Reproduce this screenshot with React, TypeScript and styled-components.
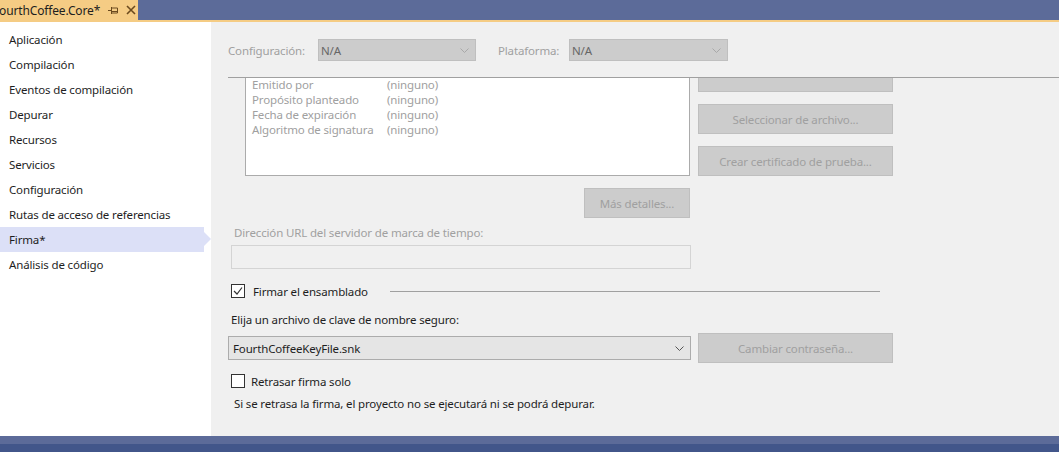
import React from "react";
import styled, { createGlobalStyle } from "styled-components";

const Global = createGlobalStyle`
  html, body { margin: 0; padding: 0; }
  body {
    font-family: "Segoe UI", "Noto Sans", "Open Sans", sans-serif;
    font-size: 11.5px;
    letter-spacing: -0.15px;
    color: #1e1e1e;
    overflow: hidden;
  }
  * { box-sizing: border-box; }
`;

const Frame = styled.div`
  width: 1059px;
  height: 452px;
  display: flex;
  flex-direction: column;
  background: #f0f0f0;
`;

const TitleBar = styled.div`
  height: 20px;
  background: #5c6b99;
  display: flex;
  align-items: stretch;
  overflow: hidden;
`;

const Tab = styled.div`
  width: 138px;
  background: #f5cc84;
  display: flex;
  align-items: center;
  overflow: hidden;
  white-space: nowrap;
`;

const TabTitle = styled.span`
  margin-left: -7px;
  font-size: 12px;
  color: #1e1e1e;
`;

const TabIcon = styled.svg<{ $gap: number }>`
  flex: none;
  margin-left: ${(p) => p.$gap}px;
`;

const Accent = styled.div`
  height: 2px;
  background: #f5cc84;
`;

const Body = styled.div`
  flex: 1;
  display: flex;
  min-height: 0;
`;

const Sidebar = styled.nav`
  width: 211px;
  background: #ffffff;
  padding-top: 5px;
  display: flex;
  flex-direction: column;
`;

const NavItem = styled.div<{ $active?: boolean }>`
  position: relative;
  height: 25px;
  line-height: 25px;
  padding-left: 9px;
  width: 204px;
  color: #1e1e1e;
  background: ${(p) => (p.$active ? "#dce0f7" : "transparent")};
  &::after {
    content: "";
    display: ${(p) => (p.$active ? "block" : "none")};
    position: absolute;
    right: -7px;
    top: 5px;
    border-top: 7.5px solid transparent;
    border-bottom: 7.5px solid transparent;
    border-left: 7px solid #dce0f7;
  }
`;

const Main = styled.main`
  flex: 1;
  display: flex;
  flex-direction: column;
  background: #f0f0f0;
  min-width: 0;
`;

const Toolbar = styled.div`
  display: flex;
  align-items: center;
  padding: 17px 0 0 17px;
  height: 39px;
`;

const DimLabel = styled.span<{ $w: number; $ml?: number }>`
  color: #a0a0a0;
  width: ${(p) => p.$w}px;
  margin-left: ${(p) => p.$ml ?? 0}px;
`;

const DimSelect = styled.div<{ $w: number }>`
  width: ${(p) => p.$w}px;
  height: 22px;
  background: #cccccc;
  border: 1px solid #bfbfbf;
  display: flex;
  align-items: center;
  padding: 0 6px 0 2px;
  color: #666666;
  justify-content: space-between;
`;

const Separator = styled.div`
  margin: 16px 0 0 17px;
  height: 1px;
  background: #a0a0a0;
`;

const Scroll = styled.div`
  flex: 1;
  overflow: hidden;
  min-height: 0;
`;

const Content = styled.div`
  margin-top: -17px;
  padding-left: 17px;
  display: flex;
  flex-direction: column;
`;

const CertRow = styled.div`
  display: flex;
  gap: 8px;
  padding-left: 17px;
`;

const CertBox = styled.div`
  width: 445px;
  height: 115px;
  background: #ffffff;
  border: 1px solid #ababab;
  padding: 0 0 0 6px;
  display: grid;
  grid-template-columns: 135px 1fr;
  grid-auto-rows: 15px;
  align-content: start;
  line-height: 15px;
  color: #a0a0a0;
`;

const ButtonCol = styled.div`
  display: flex;
  flex-direction: column;
  gap: 12px;
  padding-top: 1px;
`;

const DimButton = styled.div<{ $w: number }>`
  width: ${(p) => p.$w}px;
  height: 30px;
  background: #cccccc;
  border: 1px solid #bfbfbf;
  color: #a0a0a0;
  display: flex;
  align-items: center;
  justify-content: center;
`;

const DetailsRow = styled.div`
  width: 462px;
  display: flex;
  justify-content: flex-end;
  margin-top: 12px;
`;

const FieldLabel = styled.div<{ $ml: number; $mt: number; $dim?: boolean }>`
  margin-left: ${(p) => p.$ml}px;
  margin-top: ${(p) => p.$mt}px;
  line-height: 16px;
  color: ${(p) => (p.$dim ? "#a0a0a0" : "#1e1e1e")};
`;

const TextInput = styled.div`
  margin: 4px 0 0 3px;
  width: 460px;
  height: 24px;
  border: 1px solid #d4d4d4;
  background: #f0f0f0;
`;

const CheckRow = styled.div<{ $mt: number; $gap: number }>`
  display: flex;
  align-items: center;
  margin: ${(p) => p.$mt}px 0 0 3px;
  gap: ${(p) => p.$gap}px;
  height: 16px;
`;

const Box = styled.div`
  width: 14px;
  height: 14px;
  border: 1px solid #333333;
  background: #ffffff;
  display: flex;
  align-items: center;
  justify-content: center;
`;

const Rule = styled.div`
  width: 490px;
  height: 1px;
  background: #a0a0a0;
  margin-left: 14px;
`;

const KeyRow = styled.div`
  display: flex;
  align-items: center;
  gap: 7px;
  margin-top: 5px;
`;

const KeySelect = styled.div`
  width: 463px;
  height: 24px;
  background: #e5e5e5;
  border: 1px solid #acacac;
  display: flex;
  align-items: center;
  justify-content: space-between;
  padding: 0 6px 0 4px;
  color: #1e1e1e;
`;

const Footer = styled.div`
  height: 16px;
  display: flex;
  flex-direction: column;
`;

const FooterTop = styled.div`
  height: 8px;
  background: #5c6b99;
`;

const FooterBottom = styled.div`
  flex: 1;
  background: #42568a;
`;

const Chevron = ({ color = "#a8a8a8" }: { color?: string }) => (
  <svg width="9" height="5" viewBox="0 0 9 5">
    <path d="M0.5 0.5 L4.5 4.5 L8.5 0.5" fill="none" stroke={color} strokeWidth="1" />
  </svg>
);

const Check = () => (
  <svg width="10" height="10" viewBox="0 0 10 10">
    <path d="M1 5 L4 8 L9 1.5" fill="none" stroke="#333" strokeWidth="1.2" />
  </svg>
);

const navItems = [
  "Aplicación",
  "Compilación",
  "Eventos de compilación",
  "Depurar",
  "Recursos",
  "Servicios",
  "Configuración",
  "Rutas de acceso de referencias",
  "Firma*",
  "Análisis de código",
];

const certRows: [string, string][] = [
  ["Emitido para", "(ninguno)"],
  ["Emitido por", "(ninguno)"],
  ["Propósito planteado", "(ninguno)"],
  ["Fecha de expiración", "(ninguno)"],
  ["Algoritmo de signatura", "(ninguno)"],
];

export default function App() {
  return (
    <Frame>
      <Global />
      <TitleBar>
        <Tab>
          <TabTitle>FourthCoffee.Core*</TabTitle>
          <TabIcon $gap={8} width="11" height="9" viewBox="0 0 11 9">
            <path d="M0 4.5 H3 M3.5 1 V8 M3.5 2 H9.5 V7 H3.5 M3.5 5.5 H9.5" fill="none" stroke="#6b4a1e" strokeWidth="1" />
          </TabIcon>
          <TabIcon $gap={7} width="10" height="10" viewBox="0 0 10 10">
            <path d="M1 1 L9 9 M9 1 L1 9" stroke="#6b4a1e" strokeWidth="1.6" />
          </TabIcon>
        </Tab>
      </TitleBar>
      <Accent />
      <Body>
        <Sidebar>
          {navItems.map((n) => (
            <NavItem key={n} $active={n === "Firma*"}>
              {n}
            </NavItem>
          ))}
        </Sidebar>
        <Main>
          <Toolbar>
            <DimLabel $w={90}>Configuración:</DimLabel>
            <DimSelect $w={158}>
              <span>N/A</span>
              <Chevron />
            </DimSelect>
            <DimLabel $w={71} $ml={22}>Plataforma:</DimLabel>
            <DimSelect $w={159}>
              <span>N/A</span>
              <Chevron />
            </DimSelect>
          </Toolbar>
          <Separator />
          <Scroll>
            <Content>
              <CertRow>
                <CertBox>
                  {certRows.map(([k, v]) => (
                    <React.Fragment key={k}>
                      <span>{k}</span>
                      <span>{v}</span>
                    </React.Fragment>
                  ))}
                </CertBox>
                <ButtonCol>
                  <DimButton $w={195} />
                  <DimButton $w={195}>Seleccionar de archivo...</DimButton>
                  <DimButton $w={195}>Crear certificado de prueba...</DimButton>
                </ButtonCol>
              </CertRow>
              <DetailsRow>
                <DimButton $w={106}>Más detalles...</DimButton>
              </DetailsRow>
              <FieldLabel $ml={6} $mt={7} $dim>
                Dirección URL del servidor de marca de tiempo:
              </FieldLabel>
              <TextInput />
              <CheckRow $mt={14} $gap={8}>
                <Box>
                  <Check />
                </Box>
                <span>Firmar el ensamblado</span>
                <Rule />
              </CheckRow>
              <FieldLabel $ml={3} $mt={13}>
                Elija un archivo de clave de nombre seguro:
              </FieldLabel>
              <KeyRow>
                <KeySelect>
                  <span>FourthCoffeeKeyFile.snk</span>
                  <Chevron color="#555" />
                </KeySelect>
                <DimButton $w={195}>Cambiar contraseña...</DimButton>
              </KeyRow>
              <CheckRow $mt={10} $gap={6}>
                <Box />
                <span>Retrasar firma solo</span>
              </CheckRow>
              <FieldLabel $ml={6} $mt={7}>
                Si se retrasa la firma, el proyecto no se ejecutará ni se podrá depurar.
              </FieldLabel>
            </Content>
          </Scroll>
        </Main>
      </Body>
      <Footer>
        <FooterTop />
        <FooterBottom />
      </Footer>
    </Frame>
  );
}
